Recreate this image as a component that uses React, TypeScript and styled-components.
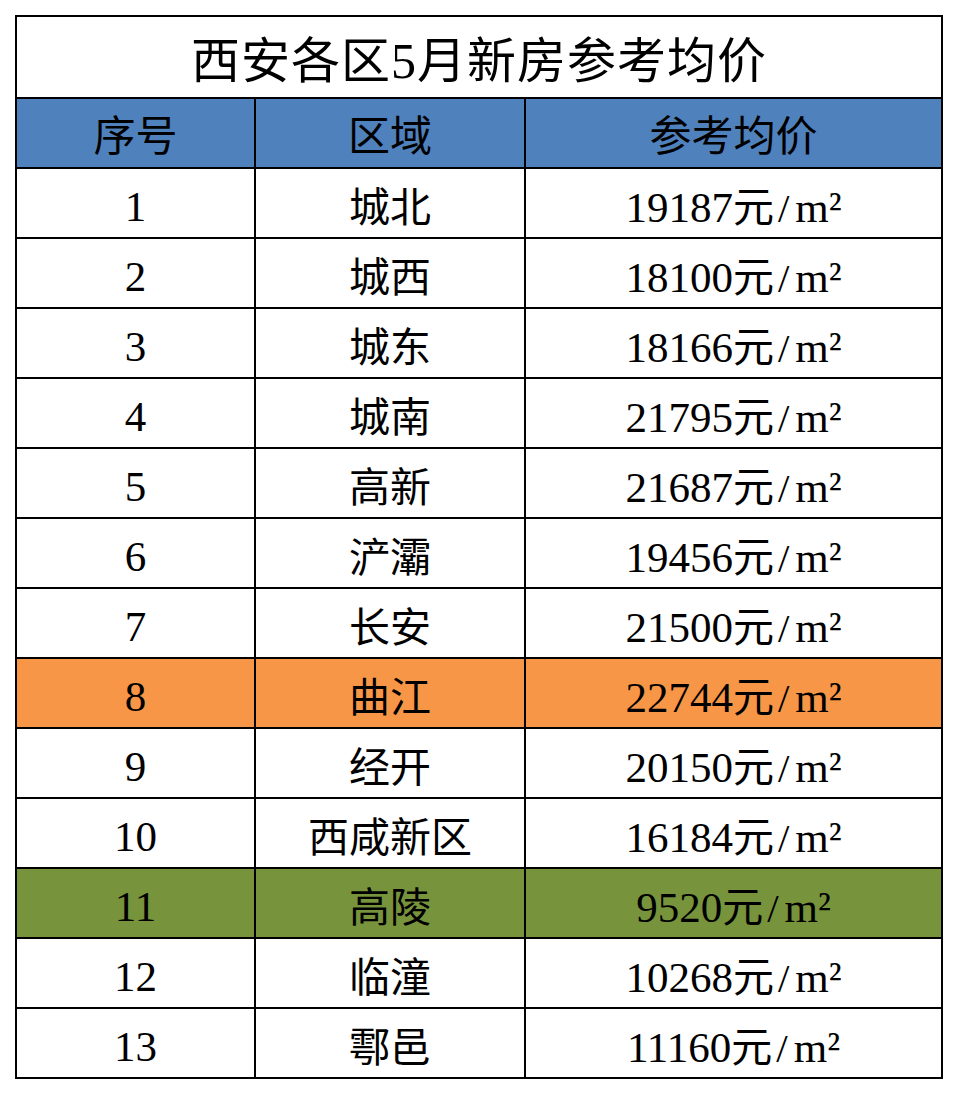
import React from "react";
import styled, { createGlobalStyle } from "styled-components";

interface IRow {
  area: string;
  price: string;
  tone?: "orange" | "green";
}

const rows: IRow[] = [
  { area: "城北", price: "19187" },
  { area: "城西", price: "18100" },
  { area: "城东", price: "18166" },
  { area: "城南", price: "21795" },
  { area: "高新", price: "21687" },
  { area: "浐灞", price: "19456" },
  { area: "长安", price: "21500" },
  { area: "曲江", price: "22744", tone: "orange" },
  { area: "经开", price: "20150" },
  { area: "西咸新区", price: "16184" },
  { area: "高陵", price: "9520", tone: "green" },
  { area: "临潼", price: "10268" },
  { area: "鄠邑", price: "11160" },
];

const toneColors = {
  orange: "#f79646",
  green: "#77933c",
};

const GlobalStyle = createGlobalStyle`
  html, body {
    margin: 0;
    padding: 0;
    background: #ffffff;
  }
  body {
    font-family: "Liberation Serif", "Noto Sans CJK SC", serif;
    color: #000000;
  }
`;

const Page = styled.div`
  width: 958px;
  height: 1094px;
  padding: 15px 0 0 15px;
  box-sizing: border-box;
`;

const Table = styled.table`
  width: 926px;
  border-collapse: collapse;
  table-layout: fixed;
  border: 2px solid #000;
`;

const Row = styled.tr<{ $h: number }>`
  height: ${(props) => props.$h}px;
`;

const TitleCell = styled.th`
  font-size: 49px;
  font-weight: 400;
  text-align: center;
  padding: 4px 0 0;
  line-height: 1;
  border: 2px solid #000;
  letter-spacing: 1px;
`;

const HeadCell = styled.th`
  background: #4f81bd;
  font-size: 42px;
  font-weight: 400;
  text-align: center;
  padding: 4px 0 0;
  line-height: 1;
  border: 2px solid #000;
`;

const Cell = styled.td<{ $tone?: "orange" | "green" }>`
  padding: 6px 0 0;
  text-align: center;
  font-size: 41px;
  border: 2px solid #000;
  background: ${(props) => (props.$tone ? toneColors[props.$tone] : "#ffffff")};
  line-height: 1;
`;

const Digits = styled.span`
  font-family: "Liberation Serif", serif;
  font-size: 43px;
`;

const Unit = styled.span`
  font-family: "Noto Sans CJK SC", sans-serif;
`;

const Slash = styled.span`
  font-family: "Liberation Serif", serif;
  display: inline-block;
  margin: 0 6px 0 4px;
`;

const App: React.FC = () => {
  return (
    <Page>
      <GlobalStyle />
      <Table>
        <colgroup>
          <col style={{ width: "239px" }} />
          <col style={{ width: "270px" }} />
          <col style={{ width: "417px" }} />
        </colgroup>
        <thead>
          <Row $h={82}>
            <TitleCell colSpan={3}>
              <Unit>西安各区</Unit>
              <Digits style={{ fontSize: "50px" }}>5</Digits>
              <Unit>月新房参考均价</Unit>
            </TitleCell>
          </Row>
          <Row $h={70}>
            <HeadCell>
              <Unit>序号</Unit>
            </HeadCell>
            <HeadCell>
              <Unit>区域</Unit>
            </HeadCell>
            <HeadCell>
              <Unit>参考均价</Unit>
            </HeadCell>
          </Row>
        </thead>
        <tbody>
          {rows.map((row, idx) => (
            <Row $h={70} key={idx}>
              <Cell $tone={row.tone}>
                <Digits>{idx + 1}</Digits>
              </Cell>
              <Cell $tone={row.tone}>
                <Unit>{row.area}</Unit>
              </Cell>
              <Cell $tone={row.tone}>
                <Digits>{row.price}</Digits>
                <Unit>元</Unit>
                <Slash>/</Slash>
                <Digits>m²</Digits>
              </Cell>
            </Row>
          ))}
        </tbody>
      </Table>
    </Page>
  );
};

export default App;
